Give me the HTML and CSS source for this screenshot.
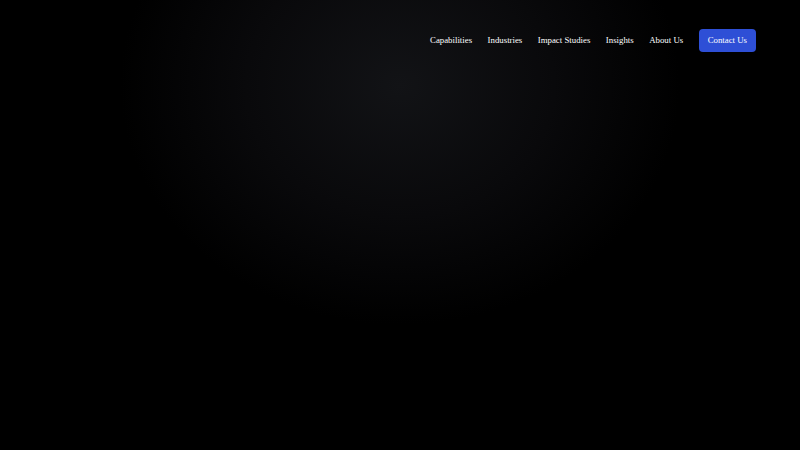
FILE: index.html
```html
<!DOCTYPE html>
<html lang="en">
<head>
<meta charset="utf-8">
<title>Home</title>
<link rel="stylesheet" href="styles.css">
</head>
<body>
<div class="page">
  <header class="header">
    <nav class="nav">
      <a class="nav-link" href="#">Capabilities</a>
      <a class="nav-link" href="#">Industries</a>
      <a class="nav-link" href="#">Impact Studies</a>
      <a class="nav-link" href="#">Insights</a>
      <a class="nav-link" href="#">About Us</a>
      <a class="nav-cta" href="#">Contact Us</a>
    </nav>
  </header>
</div>
</body>
</html>
```
FILE: styles.css
```css
html, body {
  margin: 0;
  padding: 0;
  height: 100%;
  background: #000;
}
.page {
  height: 100%;
  background: radial-gradient(ellipse 280px 240px at 400px 85px, #121316 0%, #09090b 55%, #000 100%);
  font-family: "Liberation Serif", "Times New Roman", serif;
}
.header {
  display: flex;
  justify-content: flex-end;
  padding: 29px 44px 0 0;
}
.nav {
  display: flex;
  align-items: center;
  gap: 15.5px;
}
.nav-link {
  color: #fff;
  text-decoration: none;
  font-size: 8.8px;
  line-height: 11px;
}
.nav-cta {
  color: #fff;
  text-decoration: none;
  font-size: 8.8px;
  line-height: 11px;
  background: #2e4fd6;
  border-radius: 4px;
  padding: 6px 9px;
}
```
